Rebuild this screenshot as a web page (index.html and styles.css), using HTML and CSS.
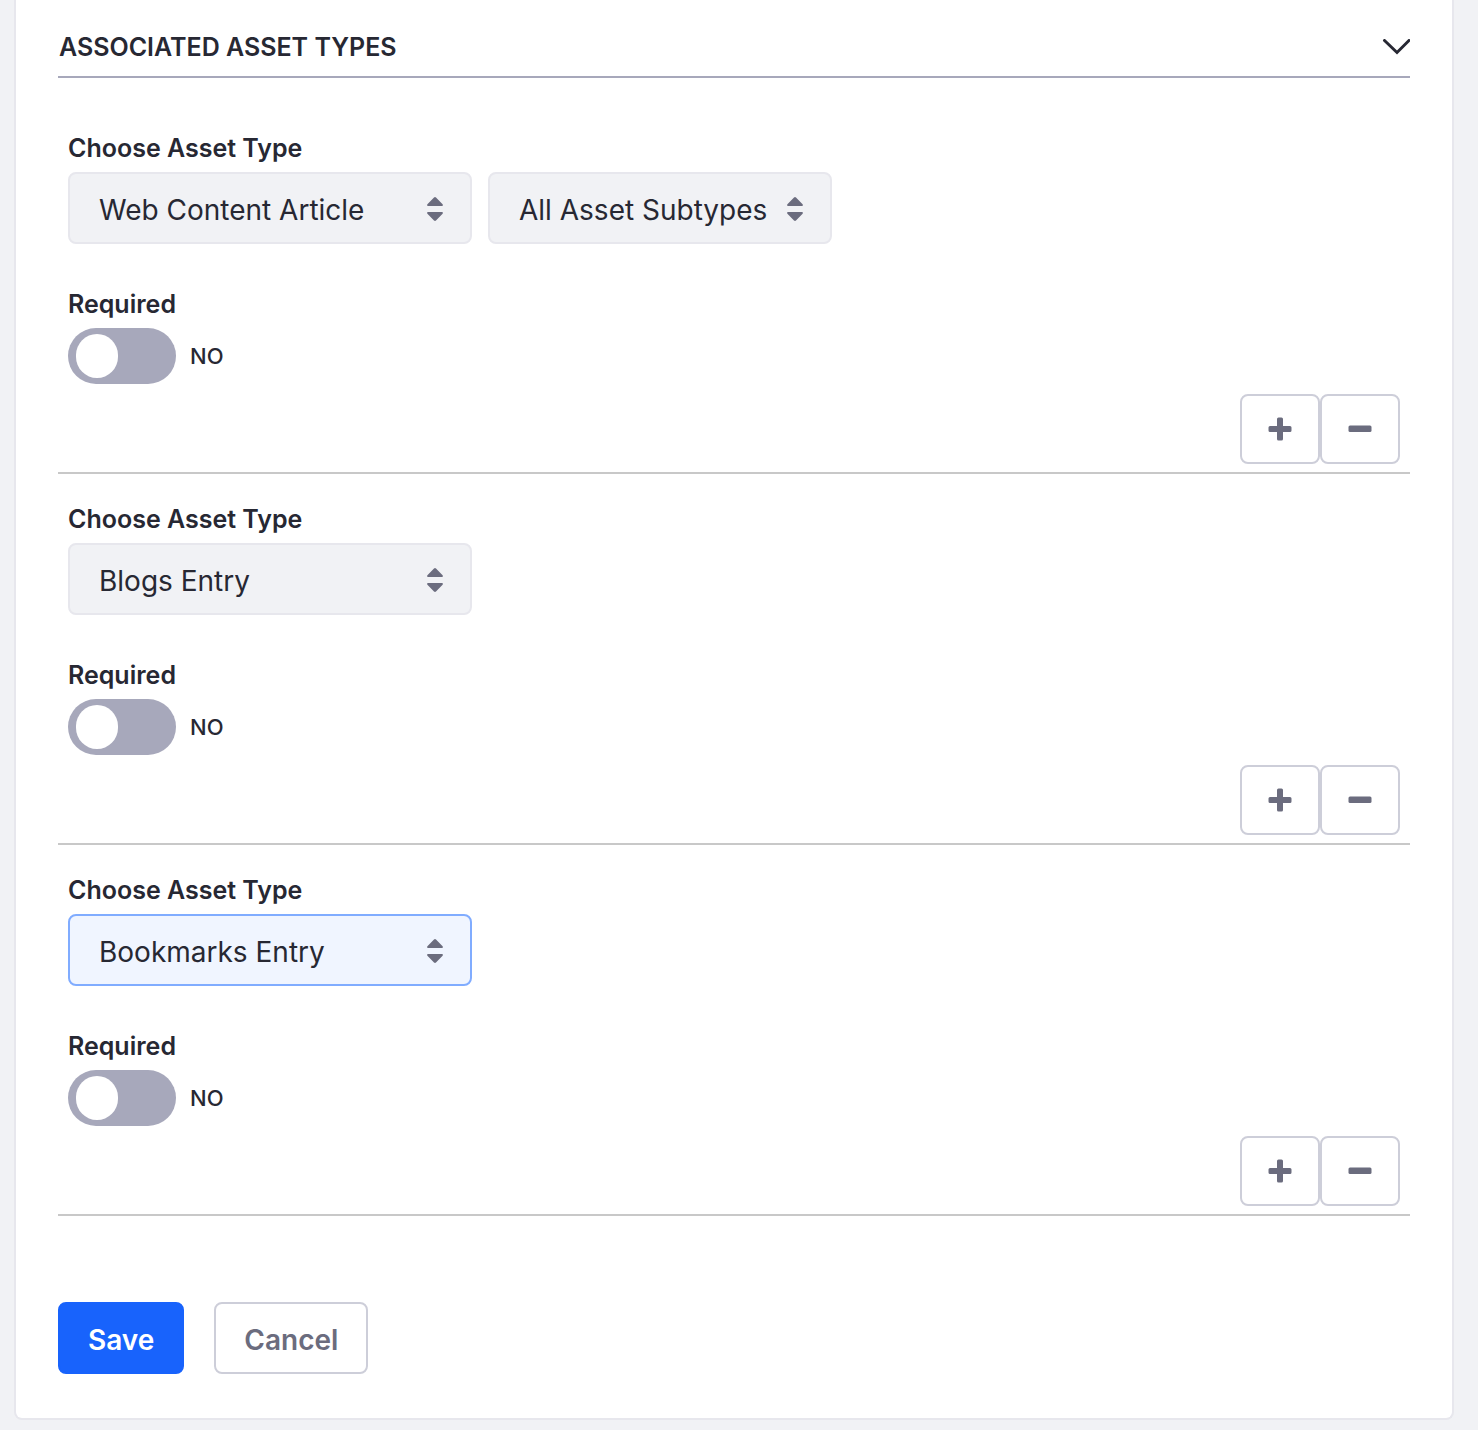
FILE: index.html
```html
<!DOCTYPE html>
<html lang="en">
<head>
<meta charset="utf-8">
<meta name="viewport" content="width=device-width, initial-scale=1">
<title>Associated Asset Types</title>
<link rel="stylesheet" href="styles.css">
</head>
<body>
<svg class="sprite" aria-hidden="true">
  <symbol id="caret-double" viewBox="0 0 16 24"><path d="M7 .5Q8-.4 9 .5L15.600 7.300Q16.400 9 15 9H1Q-.4 9 .4 7.300ZM7 23.500Q8 24.400 9 23.500L15.600 16.700Q16.400 15 15 15H1Q-.4 15 .4 16.700Z"/></symbol>
  <symbol id="plus" viewBox="0 0 24 24"><path d="M10.500.5h3q1.500 0 1.500 1.500v7h7q1.500 0 1.500 1.500v3q0 1.500-1.500 1.500h-7v7q0 1.500-1.500 1.500h-3q-1.500 0-1.500-1.500v-7H2q-1.500 0-1.500-1.500v-3Q.5 9 2 9h7V2q0-1.500 1.500-1.500Z"/></symbol>
  <symbol id="minus" viewBox="0 0 24 24"><rect x=".5" y="8.500" width="23" height="6.500" rx="1.500"/></symbol>
</svg>
<main class="sheet">
  <form class="form">
    <h2 class="panel-title">
      <button class="panel-toggle" type="button" aria-expanded="true">
        <span>ASSOCIATED ASSET TYPES</span>
        <svg class="chevron" viewBox="0 0 28 16" aria-hidden="true"><path d="M2.500 1.500 15 13.500 27 1.500"/></svg>
      </button>
    </h2>

    <section class="asset">
      <label class="label" for="type-1">Choose Asset Type</label>
      <div class="selects">
        <div class="select-box">
          <select class="select" id="type-1"><option>Web Content Article</option><option>Blogs Entry</option><option>Bookmarks Entry</option></select>
          <svg class="caret" aria-hidden="true"><use href="#caret-double"/></svg>
        </div>
        <div class="select-box select-box-subtype">
          <select class="select" aria-label="Asset Subtype"><option>All Asset Subtypes</option></select>
          <svg class="caret" aria-hidden="true"><use href="#caret-double"/></svg>
        </div>
      </div>
      <label class="label label-required" for="required-1">Required</label>
      <div class="switch-row">
        <input class="switch" id="required-1" type="checkbox" role="switch">
        <span class="switch-text">NO</span>
      </div>
      <div class="row-buttons">
        <button class="icon-button" type="button" aria-label="Add"><svg class="icon" aria-hidden="true"><use href="#plus"/></svg></button>
        <button class="icon-button" type="button" aria-label="Remove"><svg class="icon" aria-hidden="true"><use href="#minus"/></svg></button>
      </div>
    </section>

    <section class="asset">
      <label class="label" for="type-2">Choose Asset Type</label>
      <div class="selects">
        <div class="select-box">
          <select class="select" id="type-2"><option>Blogs Entry</option><option>Web Content Article</option><option>Bookmarks Entry</option></select>
          <svg class="caret" aria-hidden="true"><use href="#caret-double"/></svg>
        </div>
      </div>
      <label class="label label-required" for="required-2">Required</label>
      <div class="switch-row">
        <input class="switch" id="required-2" type="checkbox" role="switch">
        <span class="switch-text">NO</span>
      </div>
      <div class="row-buttons">
        <button class="icon-button" type="button" aria-label="Add"><svg class="icon" aria-hidden="true"><use href="#plus"/></svg></button>
        <button class="icon-button" type="button" aria-label="Remove"><svg class="icon" aria-hidden="true"><use href="#minus"/></svg></button>
      </div>
    </section>

    <section class="asset">
      <label class="label" for="type-3">Choose Asset Type</label>
      <div class="selects">
        <div class="select-box">
          <select class="select select-active" id="type-3"><option>Bookmarks Entry</option><option>Web Content Article</option><option>Blogs Entry</option></select>
          <svg class="caret" aria-hidden="true"><use href="#caret-double"/></svg>
        </div>
      </div>
      <label class="label label-required" for="required-3">Required</label>
      <div class="switch-row">
        <input class="switch" id="required-3" type="checkbox" role="switch">
        <span class="switch-text">NO</span>
      </div>
      <div class="row-buttons">
        <button class="icon-button" type="button" aria-label="Add"><svg class="icon" aria-hidden="true"><use href="#plus"/></svg></button>
        <button class="icon-button" type="button" aria-label="Remove"><svg class="icon" aria-hidden="true"><use href="#minus"/></svg></button>
      </div>
    </section>

    <div class="actions">
      <button class="button button-primary" type="submit">Save</button>
      <button class="button" type="button">Cancel</button>
    </div>
  </form>
</main>
</body>
</html>
```
FILE: styles.css
```css
* {
  box-sizing: border-box;
}

body {
  margin: 0;
  padding: 0 24px 10px 14px;
  background: #f1f2f5;
  color: #272833;
  font-family: Inter, "Liberation Sans", sans-serif;
  font-size: 28px;
}

button,
select {
  margin: 0;
  font: inherit;
  color: inherit;
}

.sprite {
  display: none;
}

.sheet {
  padding: 18px 42px 44px;
  background: #fff;
  border: 2px solid #e7e7ed;
  border-top: 0;
  border-radius: 0 0 8px 8px;
}

.panel-title {
  margin: 0 0 25px;
  border-bottom: 2px solid #a7a8bb;
}

.panel-toggle {
  display: flex;
  align-items: center;
  justify-content: space-between;
  width: 100%;
  height: 58px;
  padding: 0 0 0 1px;
  border: 0;
  background: none;
  font-size: 25px;
  font-weight: 600;
}

.chevron {
  width: 28px;
  height: 16px;
  fill: none;
  stroke: #272833;
  stroke-width: 3;
  stroke-linecap: round;
}

.asset {
  padding: 29px 10px 8px;
  border-bottom: 2px solid #c8c8c8;
}

.label {
  display: block;
  width: fit-content;
  margin-bottom: 8px;
  font-size: 25px;
  font-weight: 600;
  line-height: 32px;
}

.label-required {
  margin-top: 44px;
}

.selects {
  display: flex;
  flex-wrap: wrap;
  gap: 16px;
}

.select-box {
  display: grid;
  align-items: center;
  width: 404px;
}

.select-box-subtype {
  width: 344px;
}

.select,
.caret {
  grid-area: 1 / 1;
}

.select {
  appearance: none;
  width: 100%;
  height: 72px;
  padding: 4px 48px 0 29px;
  border: 2px solid #e7e7ed;
  border-radius: 8px;
  background: #f1f2f5;
}

.select-active {
  border-color: #80acff;
  background: #f0f5ff;
}

.caret {
  justify-self: end;
  width: 16px;
  height: 24px;
  margin: 2px 29px 0 0;
  fill: #6b6c7e;
  pointer-events: none;
}

.switch-row {
  display: flex;
  align-items: center;
  gap: 14px;
  margin-bottom: 10px;
}

.switch {
  appearance: none;
  display: flex;
  align-items: center;
  width: 108px;
  height: 56px;
  margin: 0;
  padding: 0 8px;
  border-radius: 28px;
  background: #a7a8bb;
}

.switch::before {
  content: "";
  width: 42px;
  height: 44px;
  border-radius: 21px;
  background: #fff;
}

.switch:checked {
  justify-content: flex-end;
}

.switch-text {
  font-size: 22px;
  font-weight: 500;
}

.row-buttons {
  display: flex;
  justify-content: flex-end;
}

.icon-button {
  display: grid;
  place-items: center;
  width: 80px;
  height: 70px;
  padding: 0;
  border: 2px solid #cdced9;
  border-radius: 8px;
  background: #fff;
}

.icon {
  width: 24px;
  height: 24px;
  fill: #6b6c7e;
}

.actions {
  display: flex;
  gap: 30px;
  margin-top: 86px;
}

.button {
  height: 72px;
  padding: 4px 28px 0;
  border: 2px solid #cdced9;
  border-radius: 8px;
  background: #fff;
  color: #6b6c7e;
  font-weight: 600;
}

.button-primary {
  border-color: #1863fc;
  background: #1863fc;
  color: #fff;
}
```
